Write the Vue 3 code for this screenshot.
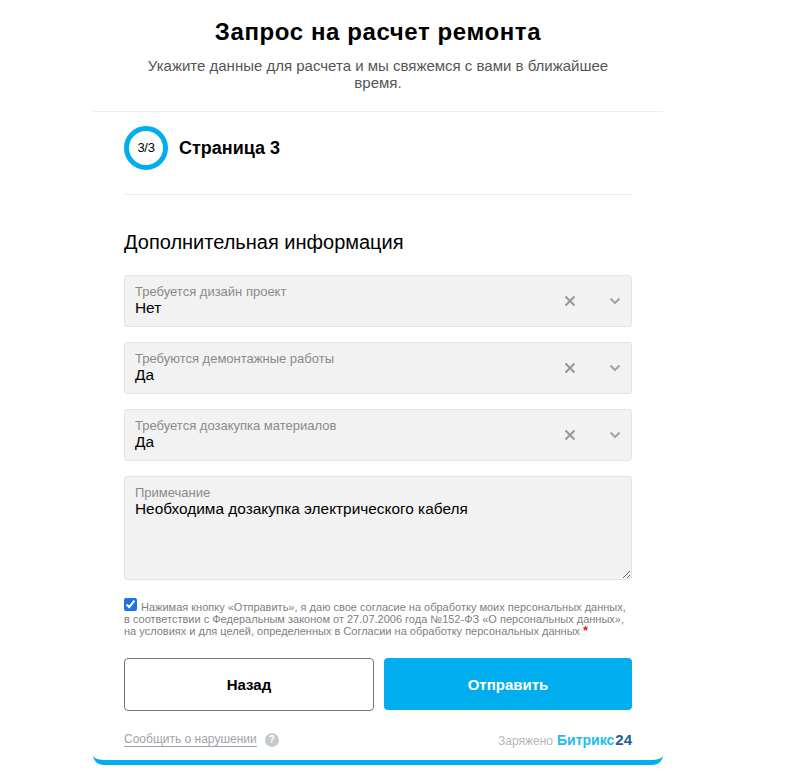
<template>
  <div class="page">
    <div class="card">
      <div class="head">
        <h1 class="title">Запрос на расчет ремонта</h1>
        <p class="subtitle">Укажите данные для расчета и мы свяжемся с вами в ближайшее время.</p>
      </div>
      <div class="body">
        <div class="step">
          <div class="step-circle">3/3</div>
          <div class="step-name">Страница 3</div>
        </div>
        <h2 class="section">Дополнительная информация</h2>
        <div v-for="f in fields" :key="f.label" class="field select">
          <div class="field-text">
            <div class="field-label">{{ f.label }}</div>
            <div class="field-value">{{ f.value }}</div>
          </div>
          <svg class="ico-clear" width="12" height="12" viewBox="0 0 12 12">
            <path d="M1.5 1.5L10.5 10.5M10.5 1.5L1.5 10.5" stroke="#979797" stroke-width="2" fill="none" />
          </svg>
          <svg class="ico-arrow" width="12" height="8" viewBox="0 0 12 8">
            <path d="M1.5 1.5L6 6L10.5 1.5" stroke="#a3a3a3" stroke-width="2" fill="none" />
          </svg>
        </div>
        <div class="field note">
          <div class="field-label">Примечание</div>
          <textarea class="note-input" v-model="note"></textarea>
        </div>
        <label class="agree">
          <input type="checkbox" class="agree-box" checked />
          <span>Нажимая кнопку «Отправить», я даю свое согласие на обработку моих персональных данных, в соответствии с Федеральным законом от 27.07.2006 года №152-ФЗ «О персональных данных», на условиях и для целей, определенных в Согласии на обработку персональных данных <b class="star">*</b></span>
        </label>
        <div class="buttons">
          <button class="btn btn-back">Назад</button>
          <button class="btn btn-send">Отправить</button>
        </div>
        <div class="foot">
          <div class="foot-left">
            <a class="abuse">Сообщить о нарушении</a>
            <span class="help">?</span>
          </div>
          <div class="foot-right">
            <span class="charged">Заряжено</span>
            <span class="brand">Битрикс</span><span class="brand-num">24</span>
          </div>
        </div>
      </div>
    </div>
  </div>
</template>

<script setup>
import { ref } from 'vue'

const fields = [
  { label: 'Требуется дизайн проект', value: 'Нет' },
  { label: 'Требуются демонтажные работы', value: 'Да' },
  { label: 'Требуется дозакупка материалов', value: 'Да' }
]
const note = ref('Необходима дозакупка электрического кабеля')
</script>

<style>
html, body {
  background: #fff;
}
</style>

<style scoped>
.page {
  padding-left: 93px;
  height: 777px;
  box-sizing: border-box;
  font-family: "Liberation Sans", Arial, sans-serif;
  color: #000;
}
.card {
  width: 570px;
  height: 765px;
  box-sizing: border-box;
  border-bottom: 5px solid #00aeef;
  border-radius: 0 0 10px 10px;
}
.head {
  height: 112px;
  padding-top: 18px;
  box-sizing: border-box;
  border-bottom: 1px solid #eee;
  text-align: center;
}
.title {
  margin: 0;
  font-size: 24px;
  line-height: 28px;
  font-weight: 700;
  letter-spacing: 0.6px;
}
.subtitle {
  margin: 11px auto 0;
  width: 480px;
  font-size: 15px;
  line-height: 17px;
  color: #555;
}
.body {
  padding: 14px 31px 0;
}
.step {
  display: flex;
  align-items: center;
  gap: 11px;
  padding-bottom: 24px;
  border-bottom: 1px solid #eee;
}
.step-circle {
  width: 44px;
  height: 44px;
  box-sizing: border-box;
  border: 5px solid #00aeef;
  border-radius: 50%;
  display: flex;
  align-items: center;
  justify-content: center;
  padding-bottom: 1px;
  font-size: 13px;
  letter-spacing: -0.3px;
}
.step-name {
  font-size: 18px;
  font-weight: 700;
}
.section {
  margin: 35px 0 21px;
  font-size: 20px;
  line-height: 24px;
  font-weight: 400;
}
.field {
  background: #f2f2f2;
  border: 1px solid #e3e3e3;
  border-radius: 3px;
  box-sizing: border-box;
}
.select {
  height: 52px;
  margin-bottom: 15px;
  padding: 9px 10px 0 10px;
  display: flex;
  align-items: flex-start;
}
.field-text {
  flex: 1;
}
.field-label {
  font-size: 13px;
  line-height: 14px;
  color: #8a8a8a;
}
.field-value {
  font-size: 15.4px;
  line-height: 17px;
}
.ico-clear {
  margin: 10px 33px 0 0;
}
.ico-arrow {
  margin-top: 12px;
}
.note {
  height: 104px;
  padding: 9px 0 0 10px;
  display: flex;
  flex-direction: column;
}
.note-input {
  flex: 1;
  padding: 0;
  border: none;
  outline: none;
  background: transparent;
  font-family: inherit;
  font-size: 15.4px;
  line-height: 17px;
  color: #000;
}
.agree {
  display: block;
  margin-top: 18px;
  font-size: 11px;
  line-height: 12px;
  color: #808080;
}
.agree-box {
  width: 13px;
  height: 13px;
  margin: 0 4px 0 0;
  vertical-align: 0;
  accent-color: #1a73e8;
}
.star {
  color: #f00;
  font-size: 12px;
}
.buttons {
  display: flex;
  gap: 10px;
  margin-top: 21px;
}
.btn {
  flex: 1;
  height: 53px;
  padding: 0;
  box-sizing: border-box;
  border-radius: 4px;
  font-family: inherit;
  font-size: 15px;
  font-weight: 700;
}
.btn-back {
  background: #fff;
  border: 1px solid #767676;
  color: #000;
}
.btn-send {
  height: 52px;
  background: #00aeef;
  border: none;
  color: #fff;
}
.foot {
  display: flex;
  justify-content: space-between;
  align-items: center;
  margin-top: 20px;
}
.foot-left {
  display: flex;
  align-items: center;
  gap: 8px;
}
.abuse {
  font-size: 12px;
  line-height: 14px;
  color: #a0a4ab;
  border-bottom: 1px solid #a0a4ab;
}
.help {
  width: 14px;
  height: 14px;
  border-radius: 50%;
  background: #c6cad0;
  color: #fff;
  font-size: 10px;
  font-weight: 700;
  line-height: 14px;
  text-align: center;
}
.foot-right {
  display: flex;
  align-items: baseline;
}
.charged {
  font-size: 12px;
  color: #b4b8be;
  margin-right: 4px;
}
.brand {
  font-size: 14px;
  font-weight: 700;
  color: #1ebef0;
}
.brand-num {
  margin-left: 1px;
  font-size: 15px;
  font-weight: 700;
  color: #215f98;
}
</style>
